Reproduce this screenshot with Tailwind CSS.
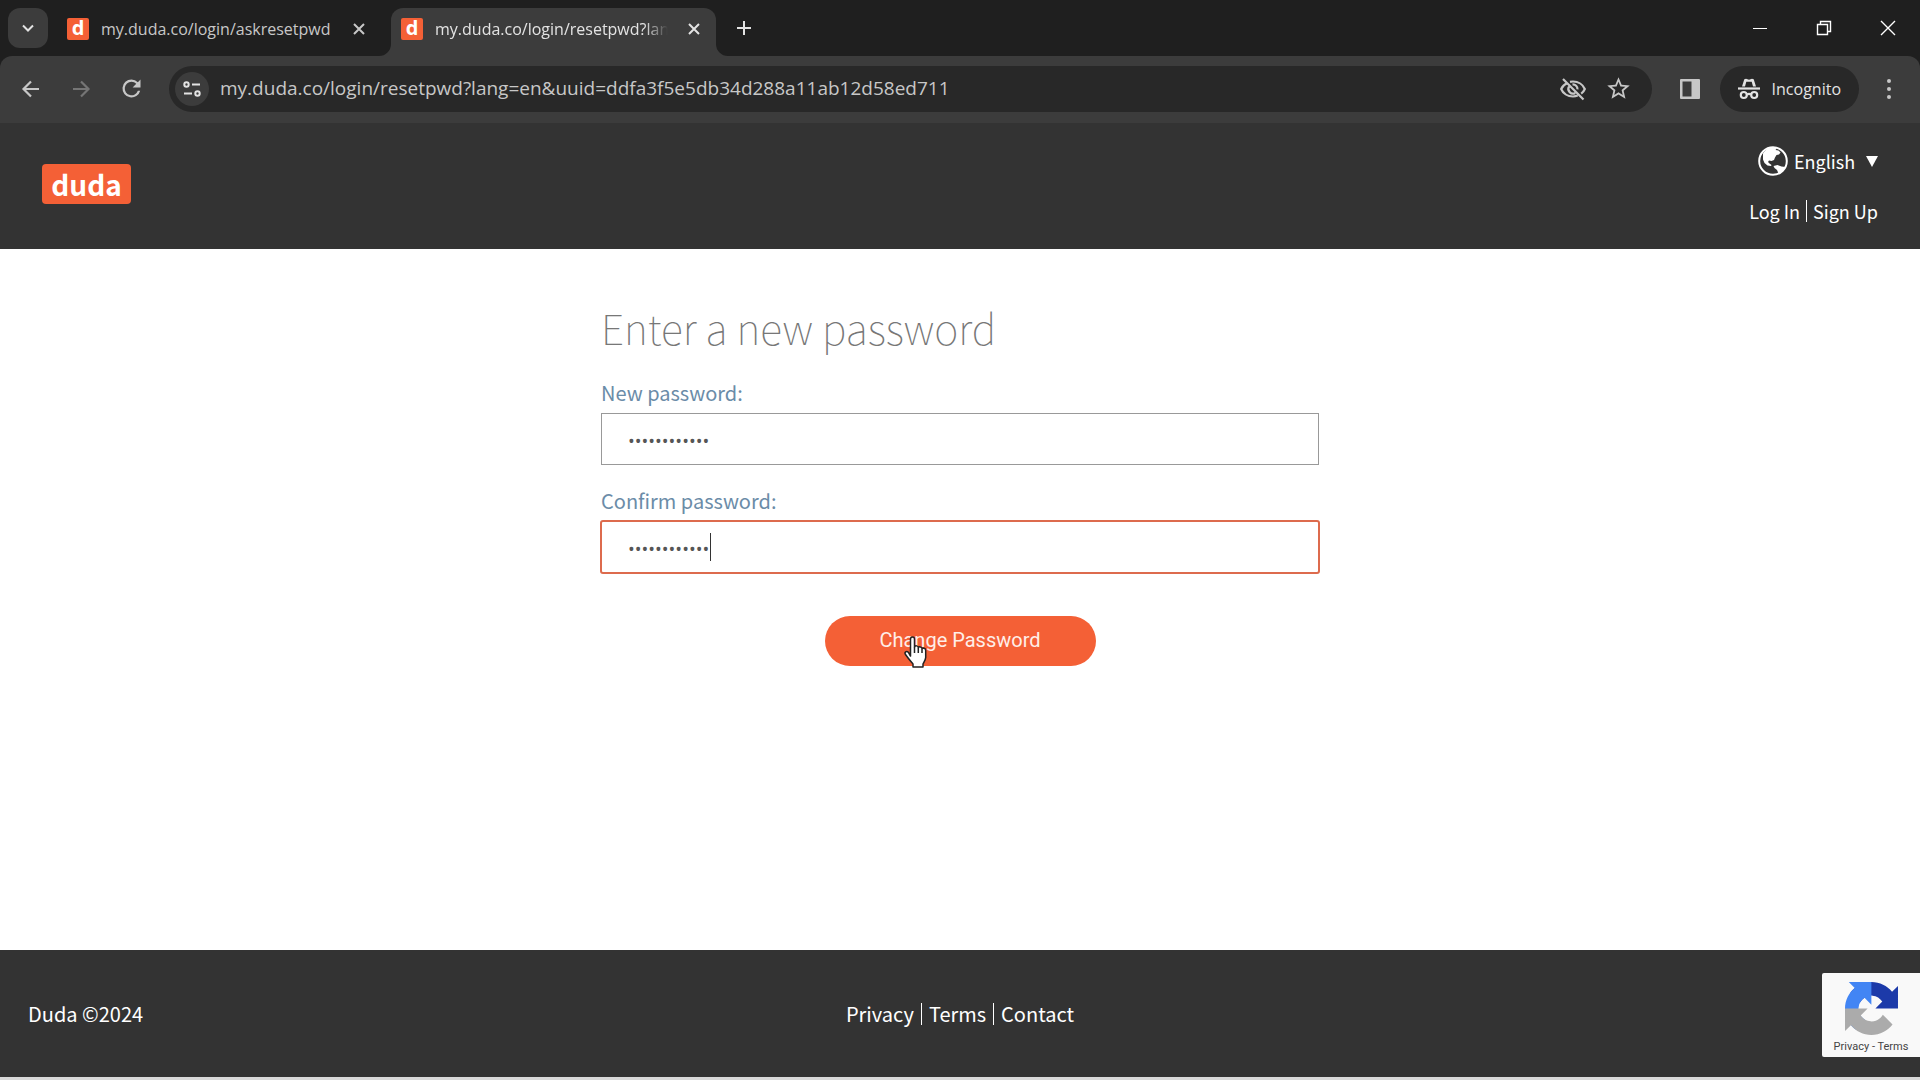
<!DOCTYPE html>
<html lang="en">
<head>
    <meta charset="UTF-8">
    <meta name="viewport" content="width=device-width, initial-scale=1.0">
    <title>my.duda.co/login/resetpwd</title>
    <!-- Tailwind CSS CDN -->
    <script src="https://cdn.jsdelivr.net/npm/@tailwindcss/browser@4"></script>
</head>
<body class="min-h-screen flex flex-col bg-white font-['Noto_Sans_CJK_SC',sans-serif]">

    <!-- Browser window -->
    <div class="bg-[#1f1f1f] text-[#e3e3e3] font-['Open_Sans',sans-serif]">
        <!-- Tab strip -->
        <div class="flex items-end h-14">
            <button type="button" aria-label="Search tabs" class="self-center ml-2 size-10 rounded-xl bg-[#3c3c3c] flex items-center justify-center">
                <svg class="size-5" viewBox="0 0 20 20" fill="none" stroke="currentColor" stroke-width="2"><path d="M5 7.5l5 5 5-5"/></svg>
            </button>
            <div class="flex items-center h-12 w-[335px] ml-2 pl-[11px] pb-[7px] text-[#c7c7c7]">
                <span class="size-[22px] shrink-0 rounded-xs bg-[#f46036] text-white text-xl font-bold leading-5 text-center">d</span>
                <span class="flex-1 ml-3 text-base whitespace-nowrap overflow-hidden">my.duda.co/login/askresetpwd</span>
                <button type="button" aria-label="Close tab" class="size-5 mr-[22px] flex items-center justify-center">
                    <svg class="size-4" viewBox="0 0 16 16" fill="none" stroke="currentColor" stroke-width="2"><path d="M3 3l10 10M13 3L3 13"/></svg>
                </button>
            </div>
            <div class="relative flex items-center h-12 w-[325px] pl-[10px] pb-[7px] rounded-t-xl bg-[#3c3c3c]">
                <svg class="absolute bottom-0 -left-3 size-3 text-[#3c3c3c]" viewBox="0 0 12 12" fill="currentColor"><path d="M12 0v12H0A12 12 0 0 0 12 0z"/></svg>
                <svg class="absolute bottom-0 -right-3 size-3 text-[#3c3c3c]" viewBox="0 0 12 12" fill="currentColor"><path d="M0 0v12h12A12 12 0 0 1 0 0z"/></svg>
                <span class="size-[22px] shrink-0 rounded-xs bg-[#f46036] text-white text-xl font-bold leading-5 text-center">d</span>
                <span class="flex-1 ml-3 text-base whitespace-nowrap overflow-hidden mask-r-from-90%">my.duda.co/login/resetpwd?lang=en</span>
                <button type="button" aria-label="Close tab" class="size-5 ml-4 mr-3 flex items-center justify-center">
                    <svg class="size-4" viewBox="0 0 16 16" fill="none" stroke="currentColor" stroke-width="2"><path d="M3 3l10 10M13 3L3 13"/></svg>
                </button>
            </div>
            <button type="button" aria-label="New tab" class="self-center ml-2 size-10 flex items-center justify-center">
                <svg class="size-4" viewBox="0 0 16 16" fill="none" stroke="currentColor" stroke-width="2"><path d="M8 1v14M1 8h14"/></svg>
            </button>
            <div class="flex self-center ml-auto text-white">
                <button type="button" aria-label="Minimize" class="w-16 h-10 flex items-center justify-center">
                    <svg class="size-4" viewBox="0 0 16 16" fill="none" stroke="currentColor"><path d="M1 8.5h14"/></svg>
                </button>
                <button type="button" aria-label="Restore" class="w-16 h-10 flex items-center justify-center">
                    <svg class="size-4" viewBox="0 0 16 16" fill="none" stroke="currentColor" stroke-width="1.4"><path d="M1.5 4.5h10v10h-10zM4.5 4V1.5h10v10H12"/></svg>
                </button>
                <button type="button" aria-label="Close" class="w-16 h-10 flex items-center justify-center">
                    <svg class="size-4" viewBox="0 0 16 16" fill="none" stroke="currentColor" stroke-width="1.4"><path d="M1 1l14 14M15 1L1 15"/></svg>
                </button>
            </div>
        </div>

        <!-- Toolbar -->
        <div class="flex items-center gap-[10px] h-[67px] px-[11px] pb-[2px] rounded-t-xl bg-[#3c3c3c] text-[#c7c7c7]">
            <button type="button" aria-label="Back" class="size-10 flex items-center justify-center">
                <svg class="size-5" viewBox="0 0 20 20" fill="none" stroke="currentColor" stroke-width="2.2"><path d="M18 10H3M10 2.500L2.500 10l7.500 7.500"/></svg>
            </button>
            <button type="button" aria-label="Forward" disabled class="size-10 flex items-center justify-center text-[#757575]">
                <svg class="size-5" viewBox="0 0 20 20" fill="none" stroke="currentColor" stroke-width="2.2"><path d="M2 10h15M10 2.500l7.500 7.500-7.500 7.500"/></svg>
            </button>
            <button type="button" aria-label="Reload" class="size-10 flex items-center justify-center">
                <svg class="size-[27px]" viewBox="0 0 24 24" fill="currentColor"><path d="M17.650 6.350A7.960 7.960 0 0 0 12 4a8 8 0 1 0 7.730 10h-2.080A6 6 0 1 1 12 6c1.660 0 3.140.69 4.220 1.780L13 11h7V4l-2.350 2.350z"/></svg>
            </button>
            <div class="flex flex-1 items-center h-[46px] ml-2 mr-2 pl-[6px] rounded-full bg-[#282828]">
                <button type="button" aria-label="View site information" class="size-[34px] shrink-0 rounded-full bg-[#3c3c3c] flex items-center justify-center text-[#e3e3e3]">
                    <svg class="size-5" viewBox="0 0 20 20" fill="none" stroke="currentColor" stroke-width="2"><circle cx="4.500" cy="5.500" r="2.200"/><path d="M10 5.500h8M2 14.500h8"/><circle cx="15.500" cy="14.500" r="2.200"/></svg>
                </button>
                <input type="text" aria-label="Address" value="my.duda.co/login/resetpwd?lang=en&amp;uuid=ddfa3f5e5db34d288a11ab12d58ed711" class="flex-1 min-w-0 ml-[11px] text-[19px] text-[#c7c7c7]">
                <button type="button" aria-label="Third-party cookies blocked" class="w-9 h-9 mr-[10px] flex items-center justify-center">
                    <svg class="size-7" viewBox="0 0 28 28" fill="none" stroke="currentColor" stroke-width="2.200"><path d="M8.500 8C5 9.500 3 12 2.200 14c1.800 4.500 6.500 7.500 11.800 7.500 1.700 0 3.300-.3 4.700-.9M11 6.900c1-.3 2-.4 3-.4 5.300 0 10 3 11.800 7.500-.7 1.800-2 3.500-3.600 4.700M10 11.500a4.700 4.700 0 0 0 6.300 6.500M13.500 9.400a4.700 4.700 0 0 1 5 5M4 4l20.500 20.500"/></svg>
                </button>
                <button type="button" aria-label="Bookmark this tab" class="w-9 h-9 mr-[15px] flex items-center justify-center">
                    <svg class="size-[27px]" viewBox="0 0 24 24" fill="currentColor"><path d="M22 9.240l-7.190-.62L12 2 9.190 8.630 2 9.240l5.460 4.730L5.820 21 12 17.270 18.180 21l-1.630-7.030L22 9.240zM12 15.400l-3.760 2.270 1-4.280-3.320-2.880 4.380-.38L12 6.100l1.710 4.040 4.380.38-3.320 2.880 1 4.280L12 15.400z"/></svg>
                </button>
            </div>
            <button type="button" aria-label="Side panel" class="size-10 flex items-center justify-center">
                <svg class="size-[22px]" viewBox="0 0 22 22" fill="currentColor"><path fill-rule="evenodd" d="M2 1h18a1 1 0 0 1 1 1v18a1 1 0 0 1-1 1H2a1 1 0 0 1-1-1V2a1 1 0 0 1 1-1zm1.500 2.500v15h9v-15z"/></svg>
            </button>
            <button type="button" class="flex items-center gap-3 h-[46px] px-[18px] rounded-full bg-[#282828] text-[#e3e3e3] text-base">
                <svg class="size-[22px]" viewBox="0 0 22 22" stroke="currentColor" stroke-width="2.200"><path d="M0 10.500h22" fill="none"/><path fill="currentColor" stroke="none" d="M4 8.500L6.300 1.300 8 .7l3 1 3-1 1.700.6L18 8.500h-3l-1.300-4.800h-5.400L7 8.500z"/><circle cx="5.800" cy="17" r="3" fill="none"/><circle cx="16.200" cy="17" r="3" fill="none"/><path fill="none" d="M9 16.500c1.200-.8 2.800-.8 4 0"/></svg>
                Incognito
            </button>
            <button type="button" aria-label="Menu" class="size-10 flex items-center justify-center">
                <svg class="size-5" viewBox="0 0 20 20" fill="currentColor"><circle cx="10" cy="2" r="2"/><circle cx="10" cy="10" r="2"/><circle cx="10" cy="18" r="2"/></svg>
            </button>
        </div>
    </div>

    <!-- Site header -->
    <header class="flex items-center justify-between h-[126px] px-[42px] bg-[#333] text-white">
        <a href="#" class="mb-1 flex items-center justify-center w-[89px] h-10 rounded-sm bg-[#f46036] text-[28px] leading-10 font-bold">duda</a>
        <div class="flex flex-col items-end gap-5 text-lg">
            <div class="flex items-center h-[30px]">
                <svg class="size-[30px] mr-[6px]" viewBox="0 0 30 30"><circle cx="15" cy="15" r="13.800" fill="none" stroke="#fff" stroke-width="2"/><path fill="#fff" d="M5 7.500C8 3 11 1.500 15 1.500l4 .8-1.500 1.700 3 .5 2 2-1.500 2-2.500.5-1.500 2.500-1 2.500-2.500 1-2.500-.5-1 1.500 1.500 1.500 2 1.500-.5 1-3.500-.5-3-2.500-1.500-3.500zM15.500 20l4-1 4 1.500 4 .5-2.500 4-4.500 2.500-1.500-3.500-2.500-2z"/></svg>
                <label for="language" class="sr-only">Language</label>
                <select id="language" class="appearance-none h-[30px] leading-[30px]">
                    <option>English</option>
                </select>
                <svg class="size-3 ml-[10px]" viewBox="0 0 12 12" fill="#fff"><path d="M0 1h12L6 12z"/></svg>
            </div>
            <nav class="flex items-center gap-[6px] h-[30px]">
                <a href="#">Log In</a>
                <span class="w-px h-[22px] bg-white"></span>
                <a href="#">Sign Up</a>
            </nav>
        </div>
    </header>

    <!-- Reset form -->
    <main class="flex-1 pt-12">
        <form class="w-full max-w-[718px] mx-auto flex flex-col text-xl">
            <h1 class="text-[41px] leading-[60px] font-thin text-[#777]">Enter a new password</h1>
            <label for="newPassword" class="mt-[22px] leading-7 text-[#6b8ca8]">New password:</label>
            <input type="password" id="newPassword" value="abcdefghijkl" class="mt-[6px] h-[52px] px-[26px] pt-1 border border-[#999] text-lg text-[#555] font-['Open_Sans',sans-serif]">
            <label for="confirmPassword" class="mt-[22px] leading-7 text-[#6b8ca8]">Confirm password:</label>
            <div class="relative mt-[6px] flex">
                <input type="password" id="confirmPassword" value="abcdefghijkl" class="flex-1 h-[52px] px-[27px] pt-1 rounded-xs outline-2 -outline-offset-1 outline-[#dd6b4d] text-lg text-[#555] font-['Open_Sans',sans-serif]">
                <span class="absolute left-[109px] top-3 w-px h-7 bg-[#333]"></span>
            </div>
            <div class="relative mt-[43px] self-center">
                <button type="submit" class="w-[271px] h-[50px] pb-[2px] rounded-full bg-[#f46036] text-[#ffeee8] text-xl font-['Roboto',sans-serif]">Change Password</button>
                <!-- Pointer -->
                <svg class="absolute left-[77px] top-5 w-7 h-8" viewBox="0 0 28 32" fill="#fff" stroke="#222" stroke-width="1.500" stroke-linejoin="round"><path d="M8.500 20V3.200c0-2.900 4-2.900 4 0V11c.6-1.700 3.600-1.500 3.800.6.900-1.300 3.500-.9 3.700 1 1-.9 3.700-.5 3.700 1.800v7.100c0 2-1.700 4.500-2.700 6.500v3H11v-3c-1.500-1.800-5.500-6.500-7.500-9.500-1.500-2.300 1-4 2.800-2.300z"/><path fill="none" d="M12.500 11v6M16.300 12v5M20 13v4"/></svg>
            </div>
        </form>
    </main>

    <!-- Site footer -->
    <footer class="relative grid grid-cols-3 items-center h-[127px] px-7 bg-[#333] text-white text-xl">
        <p>Duda ©2024</p>
        <nav class="flex items-center justify-center gap-[7px]">
            <a href="#">Privacy</a>
            <span class="w-px h-[22px] bg-white"></span>
            <a href="#">Terms</a>
            <span class="w-px h-[22px] bg-white"></span>
            <a href="#">Contact</a>
        </nav>
        <!-- reCAPTCHA badge -->
        <div class="absolute right-0 bottom-5 w-[98px] h-[84px] pt-[9px] flex flex-col items-center rounded-l-xs bg-[#f9f9f9]">
            <svg class="size-[53px]" viewBox="0 0 64 64">
                <path fill="#1c3aa9" d="M64 31.955l-.033-1.370V4.687l-7.160 7.160C50.948 4.674 42.033.093 32.050.093c-10.400 0-19.622 4.960-25.458 12.640l11.736 11.860a15.550 15.550 0 0 1 4.754-5.334c2.050-1.600 4.952-2.906 8.968-2.906.485 0 .86.057 1.135.163 4.976.393 9.288 3.140 11.828 7.124l-8.307 8.307L64 31.953"/>
                <path fill="#4285f4" d="M31.862.094l-1.370.033H4.594l7.160 7.160C4.580 13.147 0 22.060 0 32.046c0 10.400 4.960 19.622 12.640 25.458L24.500 45.768a15.550 15.550 0 0 1-5.334-4.754c-1.600-2.050-2.906-4.952-2.906-8.968 0-.485.057-.86.163-1.135.393-4.976 3.140-9.288 7.124-11.828l8.307 8.307L31.860.095"/>
                <path fill="#ababab" d="M.001 32.045l.033 1.370v25.898l7.160-7.160c5.860 7.173 14.774 11.754 24.760 11.754 10.400 0 19.622-4.960 25.458-12.640l-11.736-11.860a15.550 15.550 0 0 1-4.754 5.334c-2.050 1.600-4.952 2.906-8.968 2.906-.485 0-.86-.057-1.135-.163-4.976-.393-9.288-3.140-11.828-7.124l8.307-8.307c-10.522.04-22.400.066-27.295-.005"/>
            </svg>
            <p class="mt-1 text-[11px] leading-4 text-[#444] font-['Roboto',sans-serif] whitespace-nowrap"><a href="#">Privacy</a> - <a href="#">Terms</a></p>
        </div>
    </footer>
    <div class="h-[3px] bg-[#d9d9d9]"></div>

</body>
</html>
